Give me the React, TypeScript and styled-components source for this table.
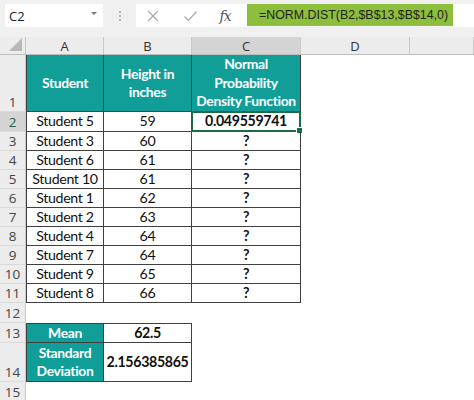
import React from "react";
import styled, { createGlobalStyle, css } from "styled-components";

const Global = createGlobalStyle`
  html, body { margin: 0; padding: 0; background: #fff; overflow: hidden; }
  #root { width: 474px; height: 400px; }
`;

const TEAL = "#119e99";
const LINE = "#3f3f3f";

const Frame = styled.div`
  width: 474px;
  height: 400px;
  display: flex;
  flex-direction: column;
  background: #fff;
  overflow: hidden;
`;

const TopBar = styled.div`
  height: 37px;
  flex: 0 0 37px;
  box-sizing: border-box;
  padding-top: 4px;
  background: #f0f0f0;
  display: flex;
  align-items: flex-start;
`;

const NameBox = styled.div`
  margin-left: 5px;
  width: 98px;
  height: 23px;
  box-sizing: border-box;
  padding: 0 6px 0 4px;
  background: #fff;
  display: flex;
  align-items: center;
  justify-content: space-between;
  font-family: "Open Sans", sans-serif;
  font-size: 13px;
  color: #222;
`;

const Caret = styled.span`
  width: 0;
  height: 0;
  border-left: 3px solid transparent;
  border-right: 3px solid transparent;
  border-top: 3px solid #7a7a7a;
  margin-top: -4px;
`;

const Dots = styled.div`
  width: 33px;
  height: 23px;
  display: flex;
  flex-direction: column;
  align-items: center;
  justify-content: center;
  gap: 2px;
  span {
    width: 2px;
    height: 2px;
    border-radius: 1px;
    background: #a0a0a0;
  }
`;

const FormulaArea = styled.div`
  flex: 1;
  height: 23px;
  background: #fff;
  display: flex;
  align-items: flex-start;
`;

const IconSlot = styled.div<{ $w: number }>`
  width: ${(p) => p.$w}px;
  height: 23px;
  display: flex;
  align-items: center;
  justify-content: center;
  color: #9b9b9b;
`;

const Fx = styled.span`
  font-family: "DejaVu Serif", "Liberation Serif", serif;
  font-style: italic;
  font-size: 14px;
  color: #555;
  letter-spacing: -1px;
`;

const FormulaText = styled.div`
  height: 22px;
  box-sizing: border-box;
  padding: 0 5px 0 12px;
  background: #8dbf3d;
  display: flex;
  align-items: center;
  font-family: "Liberation Sans", Arial, sans-serif;
  font-size: 12.4px;
  color: #1e1e1e;
  white-space: nowrap;
`;

const Sheet = styled.div<{ $rows: string }>`
  flex: 1;
  display: grid;
  grid-template-columns: 26px 78px 88px 109px 109px 1fr;
  grid-template-rows: ${(p) => p.$rows};
  background: #fff;
`;

const ColHead = styled.div<{ $active?: boolean }>`
  box-sizing: border-box;
  background: ${(p) => (p.$active ? "#d4d4d4" : "#ececec")};
  border-right: 1px solid #c9c9c9;
  border-bottom: 1px solid #bdbdbd;
  display: flex;
  align-items: center;
  justify-content: center;
  font-family: "Open Sans", sans-serif;
  font-size: 13px;
  color: #333;
`;

const Corner = styled.div`
  box-sizing: border-box;
  background: #ececec;
  border-right: 1px solid #c9c9c9;
  border-bottom: 1px solid #bdbdbd;
  display: flex;
  align-items: flex-end;
  justify-content: flex-end;
  padding: 0 3px 3px 0;
`;

const CornerTri = styled.span`
  width: 0;
  height: 0;
  border-left: 13px solid transparent;
  border-bottom: 13px solid #b8b8b8;
`;

const RowHead = styled.div<{ $active?: boolean }>`
  box-sizing: border-box;
  background: ${(p) => (p.$active ? "#d4d4d4" : "#ececec")};
  border-right: 1px solid #c9c9c9;
  border-bottom: 1px solid #dadada;
  display: flex;
  align-items: flex-end;
  justify-content: center;
  font-family: "Open Sans", sans-serif;
  font-size: 13.5px;
  line-height: 18px;
  color: ${(p) => (p.$active ? "#2f6048" : "#444")};
`;

type Kind = "head" | "data" | "blank";

const Cell = styled.div<{ $kind: Kind; $bold?: boolean; $left?: boolean; $top?: boolean }>`
  position: relative;
  box-sizing: border-box;
  display: flex;
  align-items: center;
  justify-content: center;
  text-align: center;
  white-space: nowrap;
  font-family: Lato, "Open Sans", sans-serif;
  font-size: 14.2px;
  letter-spacing: -0.35px;
  line-height: 18.5px;
  color: #111;
  font-weight: ${(p) => (p.$bold ? 700 : 400)};
  ${(p) =>
    p.$kind !== "blank" &&
    css`
      border-right: 1px solid ${LINE};
      border-bottom: 1px solid ${LINE};
      ${p.$left ? `border-left: 1px solid ${LINE};` : ""}
      ${p.$top ? `border-top: 1px solid ${LINE};` : ""}
    `}
  ${(p) =>
    p.$kind === "head" &&
    css`
      background: ${TEAL};
      color: #fff;
      font-weight: 700;
      font-size: 13.9px;
    `}
`;

const Selection = styled.div`
  position: absolute;
  left: -1px;
  top: -1px;
  right: -1px;
  bottom: -1px;
  border: 2px solid #1d6b43;
  pointer-events: none;
`;

const Handle = styled.span`
  position: absolute;
  right: -4px;
  bottom: -4px;
  width: 5px;
  height: 5px;
  background: #1d6b43;
  border: 1px solid #fff;
`;

type CellDef = { text?: React.ReactNode; kind: Kind; bold?: boolean; top?: boolean; selected?: boolean };
type RowDef = { num: number | ""; h: number; active?: boolean; cells: CellDef[] };

const blank: CellDef = { kind: "blank" };

const students: [string, number][] = [
  ["Student 5", 59],
  ["Student 3", 60],
  ["Student 6", 61],
  ["Student 10", 61],
  ["Student 1", 62],
  ["Student 2", 63],
  ["Student 4", 64],
  ["Student 7", 64],
  ["Student 9", 65],
  ["Student 8", 66],
];

const rows: RowDef[] = [
  {
    num: 1,
    h: 57,
    cells: [
      { kind: "head", text: "Student" },
      { kind: "head", text: <>Height in<br />inches</> },
      { kind: "head", text: <>Normal<br />Probability<br />Density Function</> },
      blank,
      blank,
    ],
  },
  ...students.map(([name, h], i): RowDef => ({
    num: i + 2,
    h: i === 0 ? 20 : 19,
    active: i === 0,
    cells: [
      { kind: "data", text: name },
      { kind: "data", text: String(h) },
      i === 0
        ? { kind: "data", text: "0.049559741", bold: true, selected: true }
        : { kind: "data", text: "?", bold: true },
      blank,
      blank,
    ],
  })),
  { num: 12, h: 20, cells: [blank, blank, blank, blank, blank] },
  {
    num: 13,
    h: 20,
    cells: [
      { kind: "head", text: "Mean", top: true },
      { kind: "data", text: "62.5", bold: true, top: true },
      blank,
      blank,
      blank,
    ],
  },
  {
    num: 14,
    h: 39,
    cells: [
      { kind: "head", text: <>Standard<br />Deviation</> },
      { kind: "data", text: "2.156385865", bold: true },
      blank,
      blank,
      blank,
    ],
  },
  { num: 15, h: 20, cells: [blank, blank, blank, blank, blank] },
];

const XIcon = () => (
  <svg width="14" height="14" viewBox="0 0 14 14">
    <path d="M2 2 L12 12 M12 2 L2 12" stroke="#a8a8a8" strokeWidth="1.2" fill="none" />
  </svg>
);

const CheckIcon = () => (
  <svg width="15" height="12" viewBox="0 0 15 12">
    <path d="M1.5 6.5 L5.5 10.5 L13.5 1.5" stroke="#a8a8a8" strokeWidth="1.2" fill="none" />
  </svg>
);

export default function App() {
  const template = `18px ${rows.map((r) => `${r.h}px`).join(" ")} 1fr`;
  return (
    <Frame>
      <Global />
      <TopBar>
        <NameBox>
          <span>C2</span>
          <Caret />
        </NameBox>
        <Dots>
          <span />
          <span />
          <span />
        </Dots>
        <FormulaArea>
          <IconSlot $w={34}>
            <XIcon />
          </IconSlot>
          <IconSlot $w={40}>
            <CheckIcon />
          </IconSlot>
          <IconSlot $w={30}>
            <Fx>fx</Fx>
          </IconSlot>
          <IconSlot $w={7} />
          <FormulaText>=NORM.DIST(B2,$B$13,$B$14,0)</FormulaText>
        </FormulaArea>
      </TopBar>
      <Sheet $rows={template}>
        <Corner>
          <CornerTri />
        </Corner>
        {["A", "B", "C", "D", ""].map((c) => (
          <ColHead key={c || "E"} $active={c === "C"}>
            {c}
          </ColHead>
        ))}
        {rows.map((r) => (
          <React.Fragment key={r.num}>
            <RowHead $active={r.active}>{r.num}</RowHead>
            {r.cells.map((c, ci) => (
              <Cell key={ci} $kind={c.kind} $bold={c.bold} $left={ci === 0 && c.kind !== "blank"} $top={c.top}>
                {c.text}
                {c.selected && (
                  <Selection>
                    <Handle />
                  </Selection>
                )}
              </Cell>
            ))}
          </React.Fragment>
        ))}
      </Sheet>
    </Frame>
  );
}
